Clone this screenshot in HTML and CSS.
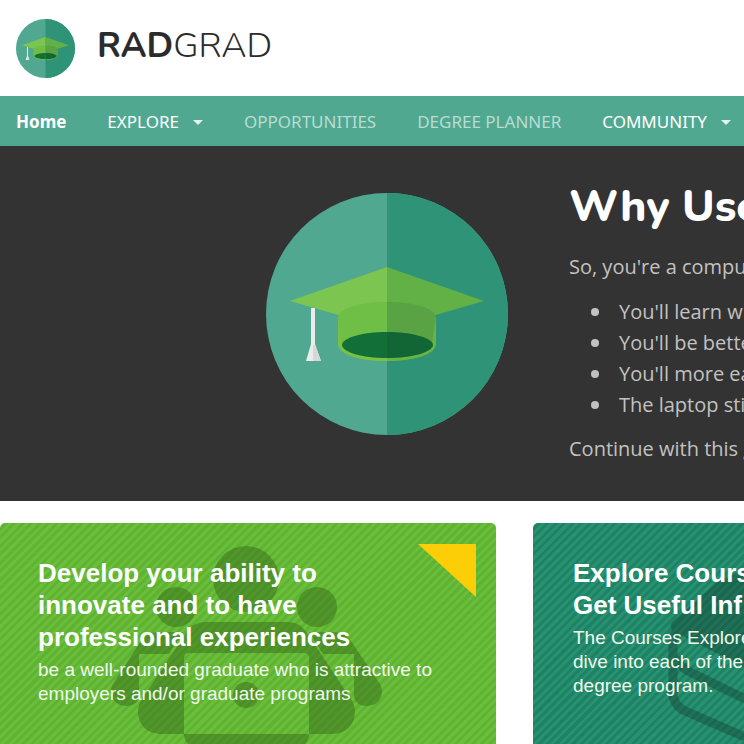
FILE: index.html
```html
<!DOCTYPE html>
<html lang="en">
<head>
<meta charset="utf-8">
<title>RadGrad</title>
<meta name="viewport" content="width=device-width, initial-scale=1">
<link rel="stylesheet" href="styles.css">
</head>
<body>
<svg width="0" height="0" class="defs" aria-hidden="true">
  <symbol id="cap" viewBox="0 0 242 242">
    <circle cx="121" cy="121" r="121" fill="#50a890"/>
    <path d="M121 0a121 121 0 0 1 0 242z" fill="#2f9378"/>
    <path d="M24 108 121 74v62z" fill="#7dc551"/>
    <path d="M218 108 121 74v62z" fill="#62b146"/>
    <path d="M72 125c0-10 22-16 49-16v59c-27 0-48-6-48-16z" fill="#6fbe45"/>
    <path d="M170 125c0-10-22-16-49-16v59c27 0 48-6 48-16z" fill="#5aa345"/>
    <path d="M72 124v27c0 10 22 17 49 17v-3c-25 0-45-6-45-14z" fill="#7ac143"/>
    <path d="M170 124v27c0 10-22 17-49 17v-3c25 0 45-6 45-14z" fill="#66b545"/>
    <path d="M121 139c-25 0-45 6-45 13s20 13 45 13z" fill="#126f38"/>
    <path d="M121 139c25 0 46 6 46 13s-21 13-46 13z" fill="#126636"/>
    <path d="M45 115h4v36l6 17H40l5-17z" fill="#ececed"/>
    <path d="M47 152h2l6 16h-8z" fill="#d6d7d8"/>
  </symbol>
</svg>
<header class="brand">
  <svg class="brand-logo" role="img" aria-label="RadGrad logo"><use href="#cap"/></svg>
  <div class="brand-name"><b>RAD</b>GRAD</div>
</header>
<nav class="menu">
  <a class="item active" href="#">Home</a>
  <button class="item drop" type="button">EXPLORE</button>
  <a class="item muted" href="#">OPPORTUNITIES</a>
  <a class="item muted" href="#">DEGREE PLANNER</a>
  <button class="item drop" type="button">COMMUNITY</button>
</nav>
<section class="hero">
  <svg class="hero-logo" aria-hidden="true"><use href="#cap"/></svg>
  <div class="hero-text">
    <h1>Why Use</h1>
    <p>So, you're a compu</p>
    <ul>
      <li>You'll learn wh</li>
      <li>You'll be bette</li>
      <li>You'll more ea</li>
      <li>The laptop sti</li>
    </ul>
    <p>Continue with this g</p>
  </div>
</section>
<main class="cards">
  <article class="card green">
    <svg class="art people" viewBox="0 0 284 221" aria-hidden="true">
      <g fill="#2d5a14">
        <circle cx="141" cy="56" r="33"/>
        <circle cx="71" cy="84" r="20"/>
        <circle cx="212" cy="84" r="20"/>
        <circle cx="141" cy="172" r="13"/>
        <path d="M34 121q7-12 20-12h24l-14 22H34v43q-2 9-13 9-14-1-15-15 0-4 2-7z"/>
        <path d="M248 121q-7-12-20-12h-24l14 22h31v43q2 9 13 9 14-1 15-15 0-4-2-7z"/>
        <path d="M79 211H55q-21-2-22-22 0-7 4-13l44-66q7-11 19-11h83q12 0 19 11l44 66q4 6 4 13-1 20-22 22h-24v-76q0-5-5-5H84q-5 0-5 5z"/>
        <path d="M79 211h125v2q-1 5-4 8H83q-3-3-4-8z"/>
      </g>
    </svg>
    <h2>Develop your ability to innovate and to have professional experiences</h2>
    <p>be a well-rounded graduate who is attractive to employers and/or graduate programs</p>
    <span class="corner"></span>
  </article>
  <article class="card teal">
    <svg class="art book" viewBox="0 0 211 221" aria-hidden="true">
      <path d="M211 48 187 57 140 98q-6 6 2 11l69 35z" fill="#12402f"/>
      <g fill="none" stroke="#12402f" stroke-width="9">
        <path d="M144 108q-4 3-4 12v50q0 12 12 18l60 26"/>
        <path d="M144 134q2 9 11 14l57 28"/>
      </g>
    </svg>
    <h2>Explore Cours<br>Get Useful Inf</h2>
    <p>The Courses Explore<br>dive into each of the<br>degree program.</p>
  </article>
</main>
</body>
</html>
```
FILE: styles.css
```css
* { box-sizing: border-box; }
body { display: flex; flex-direction: column; min-height: 100vh; margin: 0; overflow-x: hidden; background: #fff; font-family: "Open Sans", "Noto Sans", sans-serif; }
.defs { position: absolute; }
.brand { display: flex; align-items: center; gap: 22px; height: 96px; padding: 0 16px; }
.brand-logo { width: 59px; height: 59px; }
.brand-name { padding-bottom: 4px; font: 300 35px/48px Nunito, Lato, sans-serif; color: #2b2b2b; }
.brand-name b { font-weight: 700; }
.menu { display: flex; height: 50px; align-items: center; gap: 41px; padding: 2px 0 0 16px; background: #50a890; }
.item { display: flex; flex: none; align-items: center; gap: 14px; padding: 0; border: 0; background: none; color: #fff; font: 400 17px/26px "Noto Sans", "Open Sans", sans-serif; text-decoration: none; }
.active { font-weight: 700; }
.muted { color: #b9dcd3; }
.drop::after { content: ""; border: 5px solid transparent; border-top-color: #e4f2ee; border-bottom: 0; }
.hero { display: flex; height: 355px; gap: 61px; padding: 36px 0 0 266px; overflow: hidden; background: #333; color: #c2c2c2; white-space: nowrap; }
.hero-logo { flex: none; width: 242px; height: 242px; margin-top: 11px; }
.hero-text { min-width: 0; font-size: 20px; line-height: 30px; }
h1 { margin: 0 0 20px; color: #fff; font: 800 44px/50px Nunito, Lato, sans-serif; }
.hero-text p { margin: 0; }
.hero-text ul { margin: 14px 0; padding-left: 22px; list-style: none; }
li { display: flex; align-items: center; gap: 20px; line-height: 31px; }
li::before { content: ""; flex: none; width: 8px; height: 8px; border-radius: 50%; background: #c2c2c2; }
.cards { display: grid; flex: 1; grid-template-columns: 496px minmax(0, 1fr); gap: 37px; padding-top: 22px; }
.card { position: relative; padding: 34px 38px 0; overflow: hidden; border-radius: 5px 5px 0 0; color: #fff; font-family: "Liberation Sans", Arial, sans-serif; }
.green { background: repeating-linear-gradient(135deg, #69be3b 0 3px, #5fb232 3px 6px); }
.teal { padding: 34px 0 0 40px; border-radius: 5px 0 0 0; background: repeating-linear-gradient(135deg, #289172 0 3px, #1e8365 3px 6px); white-space: nowrap; }
.card h2 { position: relative; max-width: 330px; margin: 0; font-size: 26px; line-height: 32px; }
.card p { position: relative; margin: 5px 0 0; color: #f0f8ec; font-size: 19px; line-height: 24px; }
.corner { position: absolute; top: 21px; right: 20px; width: 58px; height: 53px; background: #fbce07; clip-path: polygon(0 0, 100% 0, 100% 100%); }
.art { position: absolute; top: 0; height: 221px; opacity: 0.4; }
.people { left: 105px; width: 284px; }
.book { left: 0; width: 211px; }
```
